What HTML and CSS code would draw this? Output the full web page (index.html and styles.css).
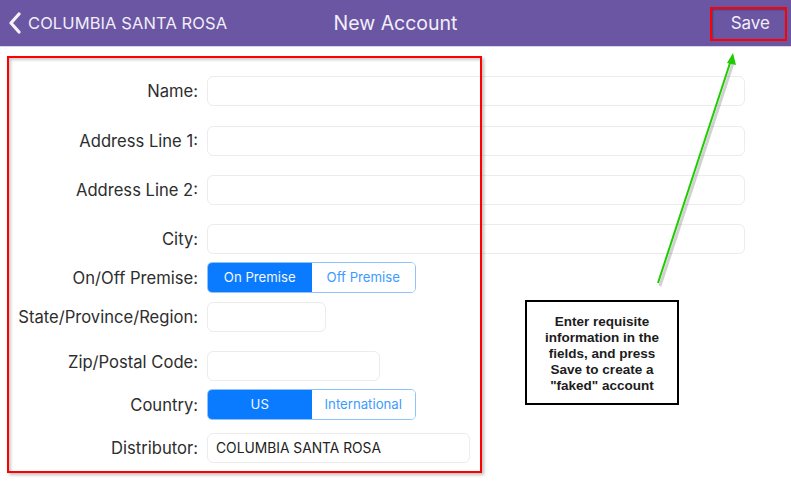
FILE: index.html
```html
<!DOCTYPE html>
<html>
<head>
<meta charset="utf-8">
<link rel="stylesheet" href="styles.css">
</head>
<body>
<div class="page">
  <header class="navbar">
    <div class="nav-back">
      <svg class="chev" width="14" height="22" viewBox="0 0 14 22"><path d="M11 2 L3 11 L11 20" fill="none" stroke="#f4f1fa" stroke-width="3.2" stroke-linecap="round" stroke-linejoin="round"/></svg>
      <span>COLUMBIA SANTA ROSA</span>
    </div>
    <div class="nav-title">New Account</div>
    <div class="nav-save">Save</div>
  </header>

  <form class="form">
    <label class="lbl">Name:</label>
    <div class="field wide"></div>

    <label class="lbl gap-xl">Address Line 1:</label>
    <div class="field wide gap-xl"></div>

    <label class="lbl gap-l">Address Line 2:</label>
    <div class="field wide gap-l"></div>

    <label class="lbl gap-l">City:</label>
    <div class="field wide gap-l"></div>

    <label class="lbl gap-s">On/Off Premise:</label>
    <div class="seg gap-s"><span class="seg-item on">On Premise</span><span class="seg-item">Off Premise</span></div>

    <label class="lbl gap-t">State/Province/Region:</label>
    <div class="field state gap-t"></div>

    <label class="lbl gap-l zip-lbl">Zip/Postal Code:</label>
    <div class="field zip gap-l"></div>

    <label class="lbl gap-s">Country:</label>
    <div class="seg gap-s"><span class="seg-item on">US</span><span class="seg-item">International</span></div>

    <label class="lbl gap-m">Distributor:</label>
    <div class="field dist gap-m">COLUMBIA SANTA ROSA</div>
  </form>

  <div class="mark form-mark"></div>
  <div class="mark save-mark"></div>

  <svg class="arrow" width="791" height="497" viewBox="0 0 791 497">
    <line x1="660" y1="286" x2="734" y2="60" stroke="rgba(0,0,0,0.18)" stroke-width="3"/>
    <line x1="658" y1="283" x2="731" y2="60" stroke="#1ecc00" stroke-width="2"/>
    <polygon points="733,53 727,63 736,65" fill="#1ecc00"/>
  </svg>

  <div class="callout">Enter requisite information in the fields, and press Save to create a "faked" account</div>
</div>
</body>
</html>
```

FILE: styles.css
```css
html, body {
  margin: 0;
  padding: 0;
  background: #ffffff;
}
.page {
  position: relative;
  width: 791px;
  height: 497px;
  overflow: hidden;
  font-family: "Inter", "Liberation Sans", sans-serif;
}
.navbar {
  height: 46px;
  background: #6b56a4;
  display: flex;
  align-items: center;
  position: relative;
  color: #f1eef8;
  border-bottom: 1px solid #d9d5e4;
}
.nav-back {
  display: flex;
  align-items: center;
  gap: 6px;
  padding-left: 8px;
  font-size: 16.5px;
  letter-spacing: 0.1px;
}
.chev { display: block; }
.nav-title {
  position: absolute;
  left: 0;
  right: 0;
  text-align: center;
  font-size: 19.5px;
  pointer-events: none;
}
.nav-save {
  margin-left: auto;
  margin-right: 21px;
  font-size: 17px;
}
.form {
  display: grid;
  grid-template-columns: 198px auto;
  column-gap: 9px;
  justify-items: start;
  align-items: center;
  margin-top: 29px;
}
.lbl {
  justify-self: end;
  font-size: 16.6px;
  color: #2e2e2e;
}
.zip-lbl { position: relative; top: -4px; }
.gap-xl { margin-top: 20px; }
.gap-l { margin-top: 19px; }
.gap-t { margin-top: 9px; }
.gap-s { margin-top: 8px; }
.gap-m { margin-top: 13px; }
.field {
  height: 30px;
  box-sizing: border-box;
  border: 1px solid #ececec;
  border-radius: 6px;
  background: #fff;
}
.wide { width: 538px; }
.state { width: 119px; }
.zip { width: 173px; }
.dist {
  width: 263px;
  display: flex;
  align-items: center;
  padding-left: 8px;
  font-size: 13.8px;
  color: #222;
}
.seg {
  display: flex;
  width: 209px;
  height: 31px;
  box-sizing: border-box;
  border: 1px solid #8fc3fb;
  border-radius: 5px;
  overflow: hidden;
}
.seg-item {
  flex: 1;
  display: flex;
  align-items: center;
  justify-content: center;
  font-size: 13.2px;
  color: #3d9bff;
  background: #fff;
  padding-bottom: 1px;
}
.seg-item.on {
  background: #0a7bff;
  color: #f4f8ff;
}
.mark {
  position: absolute;
  border: 2px solid #ff0000;
  box-sizing: border-box;
}
.form-mark {
  left: 7px;
  top: 56px;
  width: 475px;
  height: 417px;
  box-shadow: 2px 2px 3px rgba(0,0,0,0.25), inset 2px 2px 3px rgba(0,0,0,0.2);
}
.save-mark {
  left: 710px;
  top: 7px;
  width: 77px;
  height: 34px;
  box-shadow: inset 1px 1px 2px rgba(0,0,0,0.3);
}
.arrow {
  position: absolute;
  left: 0;
  top: 0;
}
.callout {
  position: absolute;
  left: 525px;
  top: 300px;
  width: 154px;
  height: 105px;
  box-sizing: border-box;
  border: 2px solid #000;
  background: #fff;
  padding: 12px 10px 0;
  text-align: center;
  font-family: "Liberation Sans", sans-serif;
  font-weight: bold;
  font-size: 13.5px;
  line-height: 16px;
  color: #1c1c1c;
}
```
